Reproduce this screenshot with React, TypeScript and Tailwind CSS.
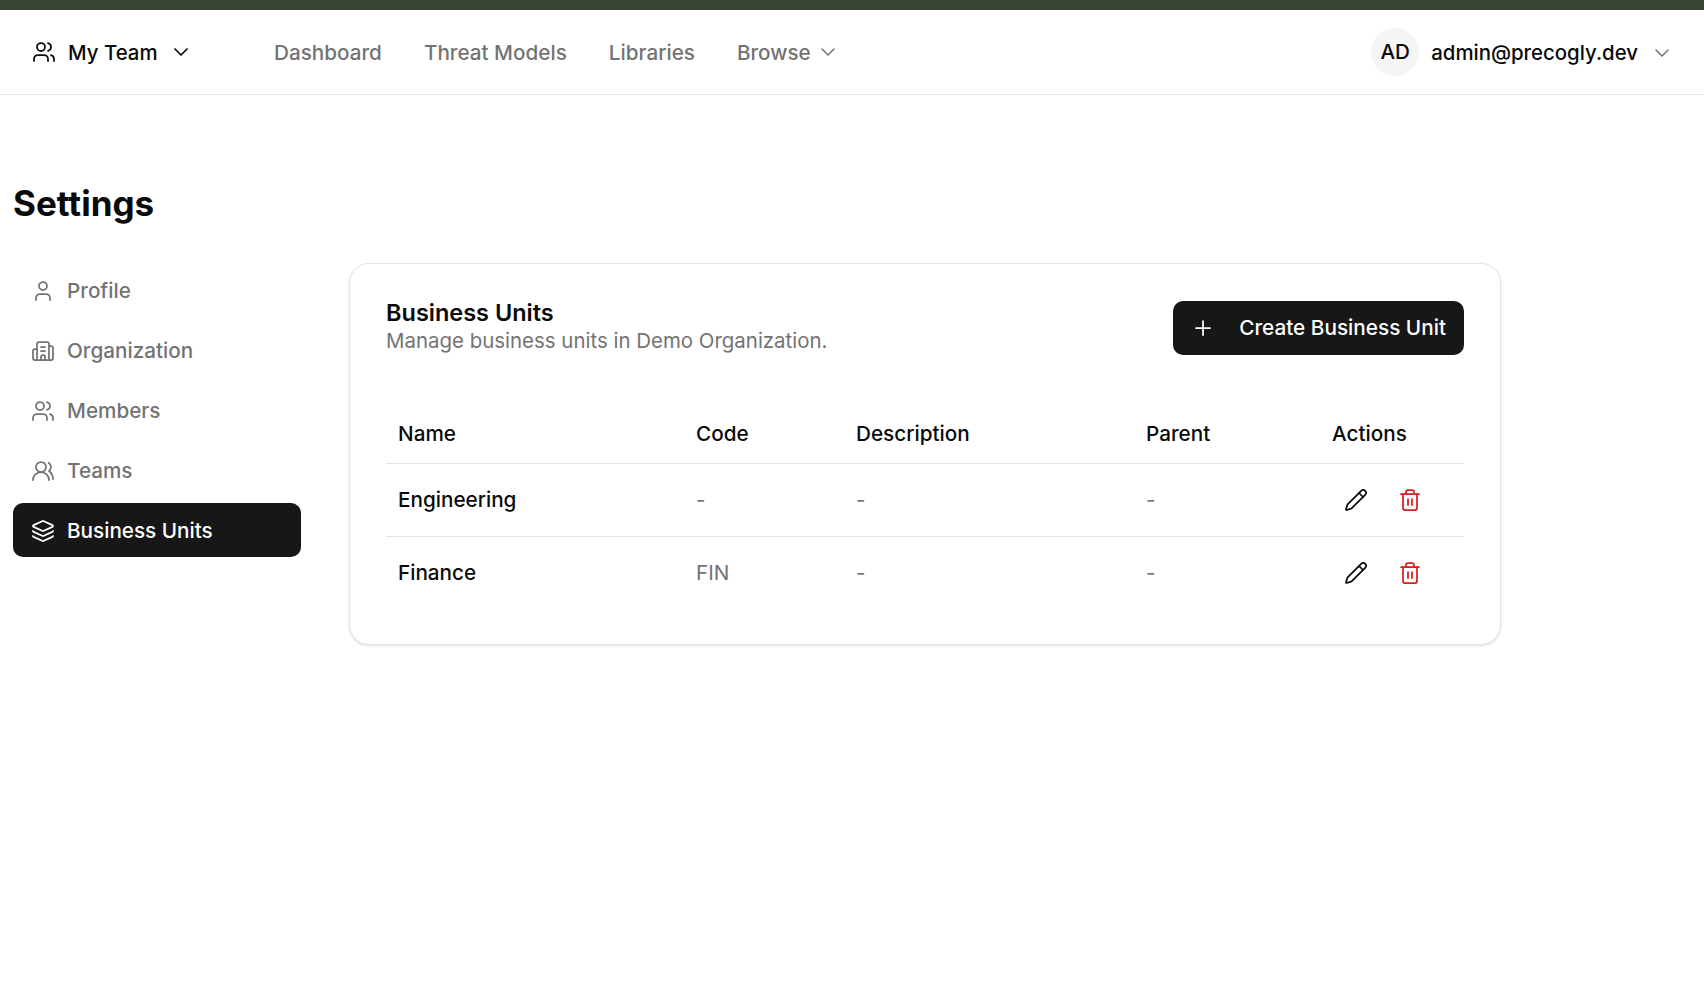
import { ChevronDown, Users, User, Building2, UsersRound, Layers, Plus, Pencil, Trash2 } from "lucide-react";

const side = [
  { label: "Profile", Icon: User },
  { label: "Organization", Icon: Building2 },
  { label: "Members", Icon: Users },
  { label: "Teams", Icon: UsersRound },
  { label: "Business Units", Icon: Layers, active: true },
];

const rows = [
  { name: "Engineering", code: "-" },
  { name: "Finance", code: "FIN" },
];

export default function App() {
  return (
    <div className="min-h-[1008px] bg-white font-['Inter',sans-serif] text-[#0a0a0a]">
      <div className="h-[10px] bg-[#3a4632]" />
      <header className="flex h-[85px] items-center justify-between border-b border-[#e5e5e5] pl-[32px] pr-[30px] pt-[1px]">
        <div className="flex items-center">
          <div className="flex w-[242px] items-center">
            <Users size={24} strokeWidth={1.75} />
            <span className="ml-[12px] pt-[1px] text-[20.4px] font-medium">My Team</span>
            <ChevronDown size={24} strokeWidth={1.75} className="ml-[11px]" />
          </div>
          <nav className="flex items-center gap-[42px] text-[20.7px] font-medium text-[#737373]">
            <span>Dashboard</span>
            <span>Threat Models</span>
            <span>Libraries</span>
            <span className="flex items-center gap-[5px]">
              Browse <ChevronDown size={24} strokeWidth={1.5} />
            </span>
          </nav>
        </div>
        <div className="flex items-center">
          <div className="-mt-[1px] flex h-[48px] w-[48px] items-center justify-center rounded-full bg-[#f5f5f5] pt-[1px] text-[20.6px] font-medium">AD</div>
          <span className="ml-[12px] pt-[1px] text-[20.4px] font-medium">admin@precogly.dev</span>
          <ChevronDown size={24} strokeWidth={1.5} className="ml-[12px] text-[#737373]" />
        </div>
      </header>
      <main className="pl-[13px] pt-[84px]">
        <h1 className="text-[35px] leading-[48px] font-bold">Settings</h1>
        <div className="mt-[36px] flex items-start gap-[48px]">
          <aside className="flex w-[288px] flex-col gap-[6px]">
            {side.map(({ label, Icon, active }) => (
              <div key={label} className={active ? "flex h-[54px] items-center gap-[12px] rounded-[10px] bg-[#171717] px-[18px] pt-[2px] text-[20.7px] font-medium text-white" : "flex h-[54px] items-center gap-[12px] rounded-[10px] px-[18px] pt-[2px] text-[20.7px] font-medium text-[#737373]"}>
                <Icon size={24} strokeWidth={1.75} />
                {label}
              </div>
            ))}
          </aside>
          <section className="w-[1152px] rounded-[20px] border border-[#e5e5e5] bg-white px-[36px] pt-[36px] pb-[35px] shadow-sm">
            <div className="flex items-start justify-between">
              <div>
                <h2 className="text-[23.5px] leading-[26px] font-semibold">Business Units</h2>
                <p className="mt-[2px] text-[20.45px] leading-[26px] text-[#737373]">Manage business units in Demo Organization.</p>
              </div>
              <button className="mt-[1px] flex h-[54px] items-center gap-[24px] rounded-[10px] bg-[#171717] pl-[18px] pr-[18px] text-[20.75px] font-medium text-white">
                <Plus size={24} strokeWidth={1.75} />
                Create Business Unit
              </button>
            </div>
            <table className="mt-[49px] w-full table-fixed text-[20.7px]">
              <thead>
                <tr className="h-[59px] border-b border-[#e5e5e5] text-left font-medium">
                  <th className="w-[298px] pl-[12px] font-medium">Name</th>
                  <th className="w-[160px] pl-[12px] font-medium">Code</th>
                  <th className="w-[290px] pl-[12px] font-medium">Description</th>
                  <th className="w-[186px] pl-[12px] font-medium">Parent</th>
                  <th className="pl-[12px] font-medium">Actions</th>
                </tr>
              </thead>
              <tbody>
                {rows.map((r, i) => (
                  <tr key={r.name} className={i === 0 ? "h-[73px] border-b border-[#e5e5e5]" : "h-[73px]"}>
                    <td className="pl-[12px] font-medium">{r.name}</td>
                    <td className="pl-[12px] text-[#737373]">{r.code}</td>
                    <td className="pl-[12px] text-[#737373]">-</td>
                    <td className="pl-[12px] text-[#737373]">-</td>
                    <td className="pl-[24px]">
                      <div className="flex items-center gap-[30px]">
                        <Pencil size={24} strokeWidth={1.75} />
                        <Trash2 size={24} strokeWidth={1.75} className="text-[#d61f1f]" />
                      </div>
                    </td>
                  </tr>
                ))}
              </tbody>
            </table>
          </section>
        </div>
      </main>
    </div>
  );
}
